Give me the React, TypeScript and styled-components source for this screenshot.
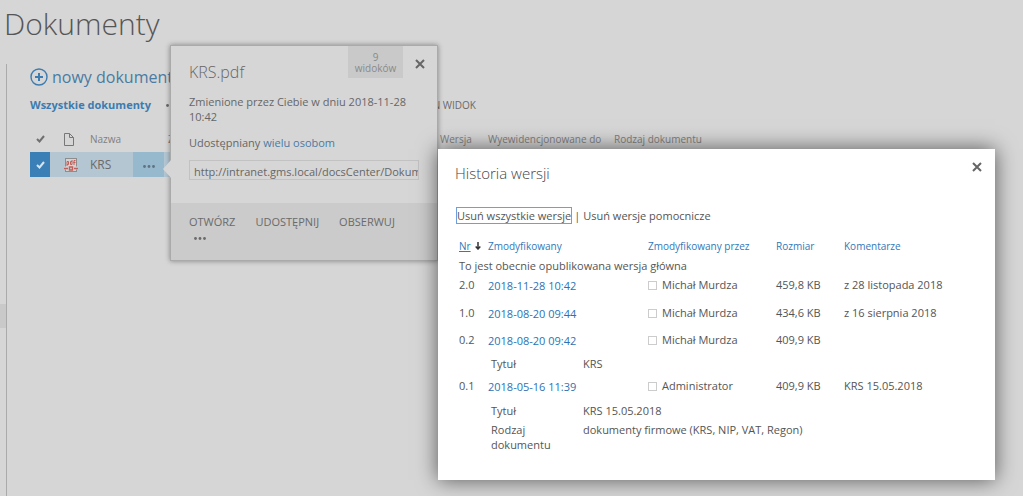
import React from "react";
import styled, { createGlobalStyle } from "styled-components";

const GlobalStyle = createGlobalStyle`
  * { box-sizing: border-box; }
  html, body { margin: 0; height: 100%; }
  #root { min-height: 100%; }
  body {
    background: #d6d6d6;
    color: #6a6a6a;
    font: 12px/16px "Open Sans", "Noto Sans", sans-serif;
    overflow: hidden;
  }
  a { color: inherit; text-decoration: none; }
  button, input { font: inherit; color: inherit; }
`;

const Page = styled.div`
  position: relative;
  min-height: 100vh;
  display: flex;
  flex-direction: column;
`;

const PageTitle = styled.h1`
  margin: 0;
  padding: 2px 4px 0;
  font-size: 30px;
  line-height: 44px;
  font-weight: 300;
  color: #555;
`;

const Columns = styled.div`
  flex: 1;
  display: flex;
  margin-top: 18px;
`;

const SideNav = styled.nav`
  width: 7px;
  border-right: 1px solid #aaa;
  padding-top: 240px;
`;

const NavItem = styled.a`
  display: block;
  height: 24px;
  background: #c9c9c9;
`;

const Content = styled.main`
  flex: 1;
  min-width: 0;
  padding-left: 23px;
`;

const NewDocument = styled.a`
  display: flex;
  align-items: center;
  gap: 4px;
  height: 26px;
  font-size: 16px;
  color: #4a7ba3;
`;

const Views = styled.div`
  display: flex;
  align-items: center;
  height: 16px;
  margin-top: 7px;
  font-size: 11px;
`;

const ActiveView = styled.a`
  width: 136px;
  font-weight: 700;
  color: #3c7cb0;
`;

const ViewLink = styled.a<{ $width: number }>`
  width: ${(p) => p.$width}px;
  text-align: right;
  font-size: 10px;
  white-space: nowrap;
`;

const MoreViews = styled.button`
  border: 0;
  padding: 0;
  background: none;
  display: flex;
`;

const DocTable = styled.table`
  margin-top: 13px;
  width: 760px;
  max-width: 100%;
  table-layout: fixed;
  border-collapse: collapse;
  th {
    height: 26px;
    padding: 0;
    text-align: left;
    font-size: 10px;
    font-weight: 400;
    color: #808080;
    white-space: nowrap;
  }
  td {
    height: 25px;
    padding: 0;
    background: #b4c6d2;
  }
  svg { display: block; }
`;

const Check = styled.label<{ $on?: boolean }>`
  position: relative;
  display: flex;
  align-items: center;
  justify-content: center;
  width: 20px;
  height: 25px;
  background: ${(p) => (p.$on ? "#3a7fb6" : "none")};
  color: ${(p) => (p.$on ? "#d5e4ef" : "#707070")};
  input {
    position: absolute;
    inset: 0;
    width: 100%;
    height: 100%;
    margin: 0;
    opacity: 0;
  }
`;

const RowMenu = styled.button`
  width: 31px;
  height: 25px;
  border: 0;
  padding: 3px 0 0;
  background: #97b9ce;
  color: #5f7380;
  display: flex;
  align-items: center;
  justify-content: center;
`;

const Callout = styled.section`
  position: absolute;
  left: 170px;
  top: 45px;
  width: 268px;
  height: 216px;
  display: flex;
  flex-direction: column;
  background: #d6d6d6;
  border: 1px solid #aaa;
  box-shadow: 0 0 5px rgba(0, 0, 0, 0.4);
`;

const CalloutArrow = styled.svg`
  position: absolute;
  left: -8px;
  top: 114px;
`;

const CalloutHead = styled.header`
  display: flex;
  align-items: flex-start;
  height: 48px;
  padding: 0 12px 0 18px;
`;

const CalloutTitle = styled.h2`
  flex: 1;
  margin: 0;
  padding-top: 14px;
  font-size: 16px;
  line-height: 24px;
  font-weight: 300;
  color: #666;
`;

const ViewCount = styled.div`
  width: 55px;
  height: 32px;
  padding-top: 6px;
  background: #c9c9c9;
  color: #8a8a8a;
  font-size: 10px;
  line-height: 11px;
  text-align: center;
`;

const CloseButton = styled.button`
  border: 0;
  padding: 0;
  margin: 13px 0 0 12px;
  background: none;
  color: #666;
  display: flex;
`;

const CalloutBody = styled.div`
  flex: 1;
  padding: 0 18px;
  font-size: 11px;
  color: #666;
  p { margin: 0 0 11px; line-height: 15px; }
  p + p { margin-bottom: 10px; }
  a { color: #4a7ba3; }
`;

const UrlField = styled.input`
  display: block;
  width: 100%;
  height: 20px;
  border: 1px solid #c2c2c2;
  padding: 2px 0 0 4px;
  background: transparent;
  outline: none;
`;

const CalloutFoot = styled.footer`
  height: 57px;
  padding: 11px 18px 0;
  display: flex;
  flex-wrap: wrap;
  align-content: flex-start;
  column-gap: 20px;
  background: #cbcbcb;
`;

const FootAction = styled.button`
  border: 0;
  padding: 0;
  background: none;
  font-size: 11px;
  line-height: 16px;
  svg { display: block; margin: 7px 0 0 5px; }
`;

const Dialog = styled.section`
  position: absolute;
  top: 149px;
  right: 28px;
  width: 557px;
  min-height: 331px;
  padding: 0 13px 24px 17px;
  background: #fff;
  color: #555;
  font-size: 11px;
  box-shadow: 0 0 20px rgba(0, 0, 0, 0.6);
`;

const DialogHead = styled.header`
  display: flex;
  justify-content: space-between;
  height: 59px;
`;

const DialogTitle = styled.h2`
  margin: 0;
  padding-top: 12px;
  font-size: 15px;
  line-height: 24px;
  font-weight: 300;
  color: #444;
`;

const VersionActions = styled.div`
  display: flex;
  align-items: center;
  gap: 3px;
  height: 15px;
  margin-left: 2px;
  color: #555;
`;

const VersionAction = styled.a<{ $focused?: boolean }>`
  line-height: 15px;
  outline: ${(p) => (p.$focused ? "1px solid #6f9ede" : "none")};
`;

const VersionTable = styled.table`
  width: 100%;
  margin: 15px 0 0 4px;
  table-layout: fixed;
  border-collapse: collapse;
  th, td { padding: 0; text-align: left; vertical-align: top; }
  th {
    height: 20px;
    font-size: 10px;
    font-weight: 400;
    color: #3277b8;
    white-space: nowrap;
  }
  th u { margin-right: 4px; }
`;

const VersionRow = styled.tr<{ $height: number }>`
  height: ${(p) => p.$height}px;
  td:nth-child(2) { color: #2b73b5; padding-top: 1px; }
`;

const Author = styled.span`
  display: flex;
  align-items: center;
  gap: 5px;
`;

const Presence = styled.i`
  width: 9px;
  height: 9px;
  border: 1px solid #ccc;
`;

const Details = styled.dl`
  display: grid;
  grid-template-columns: 80px 1fr;
  column-gap: 12px;
  row-gap: 4px;
  margin: 0 0 0 3px;
  dt, dd { margin: 0; line-height: 15px; }
`;

const CheckIcon = () => (
  <svg width="9" height="8" viewBox="0 0 9 8" fill="none" stroke="currentColor" strokeWidth="2">
    <path d="M1 4l2.500 2.500L8 1" />
  </svg>
);

const Dots = () => (
  <svg width="12" height="3" viewBox="0 0 12 3" fill="currentColor">
    <circle cx="1.500" cy="1.500" r="1.400" />
    <circle cx="6" cy="1.500" r="1.400" />
    <circle cx="10.500" cy="1.500" r="1.400" />
  </svg>
);

const CloseIcon = () => (
  <svg width="10" height="10" viewBox="0 0 10 10" stroke="currentColor" strokeWidth="2">
    <path d="M1 1l8 8M9 1L1 9" />
  </svg>
);

const PlusIcon = () => (
  <svg width="18" height="18" viewBox="0 0 18 18" fill="none" stroke="#3c7cb0">
    <circle cx="9" cy="9" r="8" strokeWidth="1.400" />
    <path d="M9 5v8M5 9h8" strokeWidth="2" />
  </svg>
);

const PageIcon = () => (
  <svg width="10" height="13" viewBox="0 0 10 13" fill="none" stroke="#777">
    <path d="M.5.5h5l4 4v8h-9zM5.500.5v4h4" />
  </svg>
);

const PdfIcon = () => (
  <svg width="14" height="16" viewBox="0 0 14 16" fill="none">
    <rect x="1.500" y="1.500" width="11" height="13" fill="#d3d3d3" stroke="#8d8d8d" />
    <path d="M0 9.500h14v3H0z" fill="#cfd0d2" />
    <path d="M3 9V4.500h1.500v3H3M8 3v4.500H6.500v-3H8M10 8V3.500h1.500M9.300 5.500h2.200" stroke="#c0605c" />
    <path d="M0 11.500h4M10 11.500h4M5.500 10h3v3h-3z" stroke="#c0605c" strokeWidth="1.400" />
  </svg>
);

const SortIcon = () => (
  <svg width="6" height="8" viewBox="0 0 6 8" fill="none" stroke="#333" strokeWidth="1.500">
    <path d="M3 0v7M.7 4.500L3 7l2.300-2.500" />
  </svg>
);

type Version = {
  nr: string;
  date: string;
  author: string;
  size: string;
  comment?: string;
  height: number;
  details?: { height: number; items: [string, string][] };
};

const versions: Version[] = [
  { nr: "2.0", date: "2018-11-28 10:42", author: "Michał Murdza", size: "459,8 KB", comment: "z 28 listopada 2018", height: 28 },
  { nr: "1.0", date: "2018-08-20 09:44", author: "Michał Murdza", size: "434,6 KB", comment: "z 16 sierpnia 2018", height: 27 },
  {
    nr: "0.2", date: "2018-08-20 09:42", author: "Michał Murdza", size: "409,9 KB", height: 24,
    details: { height: 22, items: [["Tytuł", "KRS"]] },
  },
  {
    nr: "0.1", date: "2018-05-16 11:39", author: "Administrator", size: "409,9 KB", comment: "KRS 15.05.2018", height: 25,
    details: {
      height: 52,
      items: [
        ["Tytuł", "KRS 15.05.2018"],
        ["Rodzaj dokumentu", "dokumenty firmowe (KRS, NIP, VAT, Regon)"],
      ],
    },
  },
];

export default function App() {
  return (
    <>
      <GlobalStyle />
      <Page>
        <PageTitle>Dokumenty</PageTitle>
        <Columns>
          <SideNav>
            <NavItem href="#" aria-label="Dokumenty" />
          </SideNav>
          <Content>
            <NewDocument href="#">
              <PlusIcon />
              nowy dokument
            </NewDocument>
            <Views>
              <ActiveView href="#">Wszystkie dokumenty</ActiveView>
              <MoreViews aria-label="Więcej widoków"><Dots /></MoreViews>
              <ViewLink href="#" $width={298}>ZAPISZ TEN WIDOK</ViewLink>
            </Views>
            <DocTable>
              <colgroup>
                <col style={{ width: 34 }} />
                <col style={{ width: 26 }} />
                <col style={{ width: 43 }} />
                <col style={{ width: 35 }} />
                <col style={{ width: 272 }} />
                <col style={{ width: 48 }} />
                <col style={{ width: 126 }} />
                <col />
              </colgroup>
              <thead>
                <tr>
                  <th><Check><input type="checkbox" aria-label="Zaznacz wszystko" /><CheckIcon /></Check></th>
                  <th><PageIcon /></th>
                  <th>Nazwa</th>
                  <th />
                  <th>Zmodyfikowane</th>
                  <th>Wersja</th>
                  <th>Wyewidencjonowane do</th>
                  <th>Rodzaj dokumentu</th>
                </tr>
              </thead>
              <tbody>
                <tr>
                  <td><Check $on><input type="checkbox" defaultChecked aria-label="Zaznacz KRS" /><CheckIcon /></Check></td>
                  <td><PdfIcon /></td>
                  <td><a href="#">KRS</a></td>
                  <td><RowMenu aria-label="Menu"><Dots /></RowMenu></td>
                  <td /><td /><td /><td />
                </tr>
              </tbody>
            </DocTable>
          </Content>
        </Columns>

        <Callout>
          <CalloutArrow width="8" height="18" viewBox="0 0 8 18">
            <path d="M8 0L0 9l8 9z" fill="#d6d6d6" />
          </CalloutArrow>
          <CalloutHead>
            <CalloutTitle>KRS.pdf</CalloutTitle>
            <ViewCount>9<br />widoków</ViewCount>
            <CloseButton aria-label="Zamknij"><CloseIcon /></CloseButton>
          </CalloutHead>
          <CalloutBody>
            <p>Zmienione przez Ciebie w dniu 2018-11-28 10:42</p>
            <p>Udostępniany <a href="#">wielu osobom</a></p>
            <UrlField readOnly aria-label="Adres dokumentu" value="http://intranet.gms.local/docsCenter/Dokumenty/KRS.pdf" />
          </CalloutBody>
          <CalloutFoot>
            <FootAction>OTWÓRZ</FootAction>
            <FootAction>UDOSTĘPNIJ</FootAction>
            <FootAction>OBSERWUJ</FootAction>
            <FootAction aria-label="Więcej"><Dots /></FootAction>
          </CalloutFoot>
        </Callout>

        <Dialog role="dialog" aria-label="Historia wersji">
          <DialogHead>
            <DialogTitle>Historia wersji</DialogTitle>
            <CloseButton aria-label="Zamknij"><CloseIcon /></CloseButton>
          </DialogHead>
          <VersionActions>
            <VersionAction href="#" $focused>Usuń wszystkie wersje</VersionAction>
            <span>|</span>
            <VersionAction href="#">Usuń wersje pomocnicze</VersionAction>
          </VersionActions>
          <VersionTable>
            <colgroup>
              <col style={{ width: 29 }} />
              <col style={{ width: 160 }} />
              <col style={{ width: 128 }} />
              <col style={{ width: 68 }} />
              <col />
            </colgroup>
            <thead>
              <tr>
                <th><a href="#"><u>Nr</u><SortIcon /></a></th>
                <th><a href="#">Zmodyfikowany</a></th>
                <th><a href="#">Zmodyfikowany przez</a></th>
                <th><a href="#">Rozmiar</a></th>
                <th><a href="#">Komentarze</a></th>
              </tr>
            </thead>
            <tbody>
              <tr style={{ height: 19 }}>
                <td colSpan={5}>To jest obecnie opublikowana wersja główna</td>
              </tr>
              {versions.map((v) => (
                <React.Fragment key={v.nr}>
                  <VersionRow $height={v.height}>
                    <td>{v.nr}</td>
                    <td><a href="#">{v.date}</a></td>
                    <td><Author><Presence />{v.author}</Author></td>
                    <td>{v.size}</td>
                    <td>{v.comment}</td>
                  </VersionRow>
                  {v.details && (
                    <tr style={{ height: v.details.height }}>
                      <td />
                      <td colSpan={4}>
                        <Details>
                          {v.details.items.map(([k, val]) => (
                            <React.Fragment key={k}><dt>{k}</dt><dd>{val}</dd></React.Fragment>
                          ))}
                        </Details>
                      </td>
                    </tr>
                  )}
                </React.Fragment>
              ))}
            </tbody>
          </VersionTable>
        </Dialog>
      </Page>
    </>
  );
}
